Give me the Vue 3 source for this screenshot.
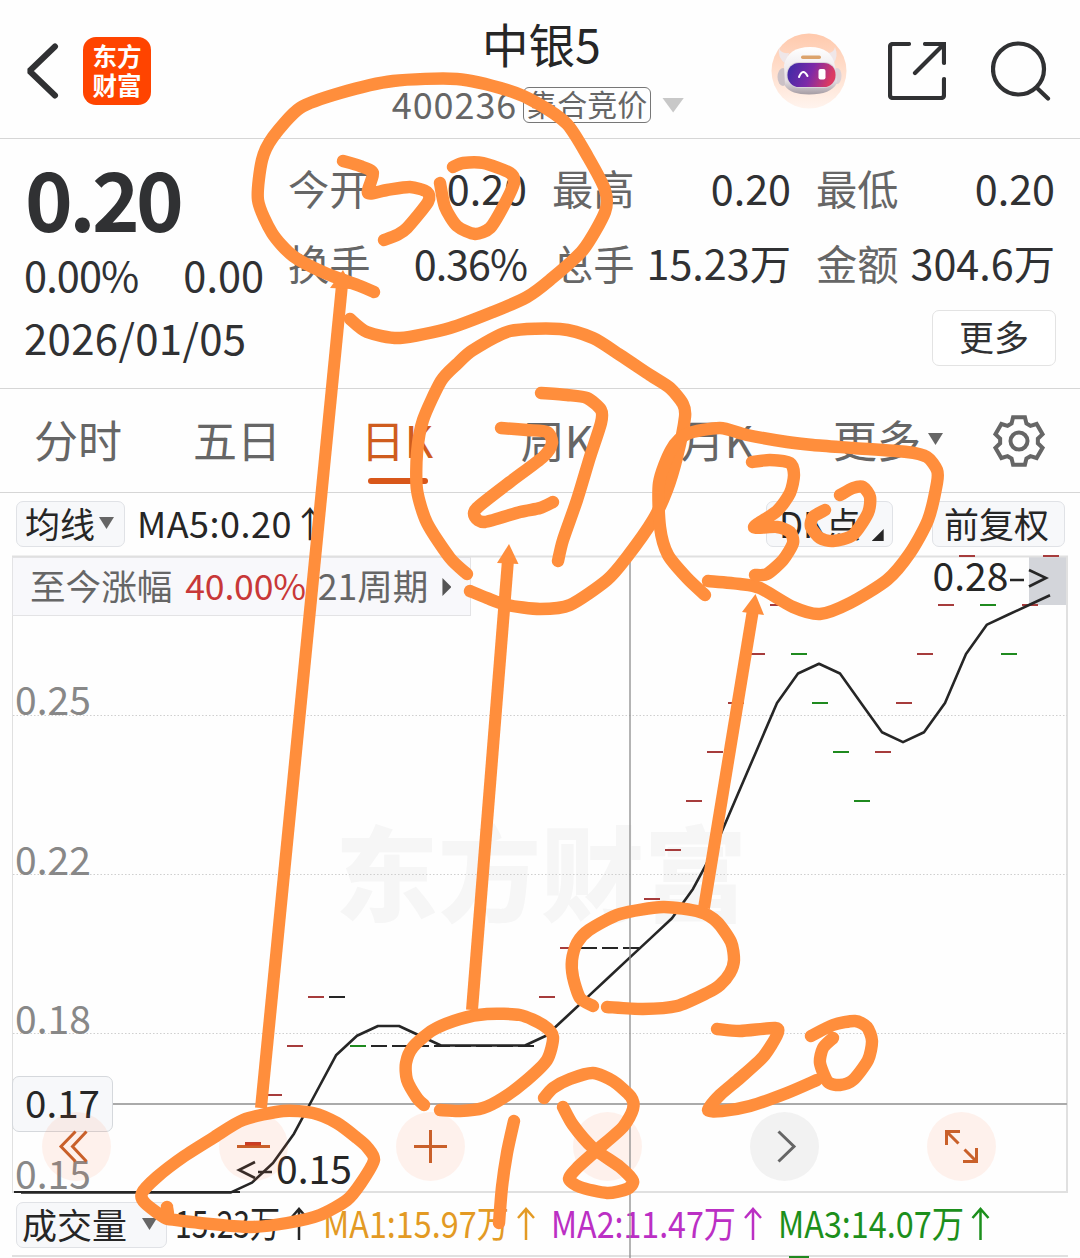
<template>
  <div class="stock-page">
    <header class="top-bar">
      <div class="top-bar__left">
        <svg class="icon-back" width="34" height="58" viewBox="0 0 34 58">
          <path d="M30 4.500L4.500 29L30 53.500" />
        </svg>
        <div class="brand">
          <span>东方</span>
          <span>财富</span>
        </div>
      </div>
      <div class="top-bar__center">
        <div class="stock-name">中银5</div>
        <div class="stock-sub">
          <span class="stock-code">400236</span>
          <span class="stock-tag">集合竞价</span>
          <i class="caret caret--light"></i>
        </div>
      </div>
      <div class="top-bar__right">
        <svg width="76" height="76" viewBox="0 0 76 76">
          <defs>
            <linearGradient id="avatarBg" x1="0" y1="0" x2="0" y2="1">
              <stop offset="0" stop-color="#ffc9ac" />
              <stop offset="1" stop-color="#fff4ee" />
            </linearGradient>
            <linearGradient id="visor" x1="0" y1="0" x2="1" y2="0.2">
              <stop offset="0" stop-color="#3a2ba6" />
              <stop offset="0.55" stop-color="#7d2aa8" />
              <stop offset="1" stop-color="#dc3a62" />
            </linearGradient>
            <linearGradient id="helmet" x1="0" y1="0" x2="0" y2="1">
              <stop offset="0" stop-color="#ffffff" />
              <stop offset="0.7" stop-color="#e6e0e4" />
              <stop offset="1" stop-color="#a59ca3" />
            </linearGradient>
          </defs>
          <circle cx="38" cy="38" r="37.500" fill="url(#avatarBg)" />
          <path d="M8 14Q9 21 18 20L15 31Q6 25 8 14ZM64 14Q68 24 62 31L56 20Q63 20 64 14Z" fill="#efe6e8" />
          <ellipse cx="12" cy="44" rx="5.500" ry="9" fill="#cbc1c6" />
          <ellipse cx="66" cy="43" rx="4.500" ry="8" fill="#ddd2d6" />
          <path d="M13 32Q17 14 39 14Q61 14 64 33L66 50Q60 61.500 38 61.500Q20 61.500 14 53Z" fill="url(#helmet)" />
          <rect x="30" y="22.500" width="20" height="3.500" rx="1.700" fill="#dca36c" />
          <rect x="15.500" y="29" width="50" height="26" rx="12.500" fill="#d9d2da" />
          <rect x="16.500" y="30" width="48" height="24" rx="11.500" fill="url(#visor)" />
          <path d="M28 44Q32 34.500 36.500 43" fill="none" stroke="#fff" stroke-width="2" stroke-linecap="round" />
          <rect x="47.500" y="36" width="7" height="10.500" rx="2" fill="#fff" />
        </svg>
        <svg class="icon-line icon-share" width="58" height="58" viewBox="0 0 58 58">
          <path d="M21 2H5Q2 2 2 5V53Q2 56 5 56H53Q56 56 56 53V37" />
          <path d="M37 2H56V21M55 3L27 31" />
        </svg>
        <svg class="icon-line icon-search" width="60" height="60" viewBox="0 0 60 60">
          <circle cx="27.500" cy="28" r="25.500" />
          <path d="M46 47L57 57.500" />
        </svg>
      </div>
    </header>

    <section class="quote">
      <div class="quote__main">
        <div class="quote__price">0.20</div>
        <div class="quote__change"><span>0.00%</span><span>0.00</span></div>
        <div class="quote__date">2026/01/05</div>
      </div>
      <div class="quote__side">
        <dl class="quote__grid">
          <div v-for="item in quoteItems" :key="item.label" class="quote__item">
            <dt>{{ item.label }}</dt>
            <dd :class="{ tight: item.value.endsWith('%') }">{{ item.value }}</dd>
          </div>
        </dl>
        <button class="more-btn">更多</button>
      </div>
    </section>

    <nav class="tabs">
      <div
        v-for="tab in tabs"
        :key="tab.label"
        :class="['tabs__item', { 'tabs__item--active': tab.active }]"
      >
        {{ tab.label }}<i v-if="tab.menu" class="caret"></i>
      </div>
      <svg class="gear" width="54" height="54" viewBox="-27 -27 54 54">
        <path :d="gearPath" />
        <circle r="8.500" />
      </svg>
    </nav>

    <section class="indicator">
      <button class="chip chip--ma">均线<i class="caret"></i></button>
      <span class="indicator__value">MA5:0.20<span class="up">↑</span></span>
      <button class="chip chip--dk">DK点<i class="corner"></i></button>
      <button class="chip chip--adj">前复权</button>
    </section>

    <section class="chart">
      <svg class="chart__canvas" width="1080" height="640" viewBox="0 555 1080 640">
        <text class="watermark" x="335" y="914" textLength="412">东方财富</text>
        <rect x="1029" y="556" width="38" height="49" fill="#d3d5da" />
        <path class="frame" d="M12 556.500H1067V1192H12" />
        <path class="frame frame--left" d="M12.500 556V1192" />
        <path
          v-for="y in [715.5, 874.5, 1033.5]"
          :key="y"
          class="grid"
          :d="`M13 ${y}H1067`"
        />
        <text v-for="l in axisLabels" :key="l.text" class="axis" x="15" :y="l.y">{{ l.text }}</text>
        <path class="cross" d="M112 1104H1067" />
        <path
          v-for="(bar, i) in bars"
          :key="i"
          :d="`M${bar.x - 8} ${bar.y}h16`"
          :stroke="bar.color"
          stroke-width="2"
        />
        <polyline class="ma-line" :points="maPoints" />
        <text class="mark" x="932.500" y="591">0.28</text>
        <path class="mark-line" d="M1010 580H1024M1029 570L1046 578L1029 586.500" />
        <text class="mark" x="276" y="1184">0.15</text>
        <path class="mark-line" d="M255 1162L239 1170L255 1178M258 1172H272" />
      </svg>

      <div class="range-info">
        <span>至今涨幅</span>
        <span class="range-info__pct">40.00%</span>
        <span>21周期</span>
        <i class="caret-right"></i>
      </div>
      <div class="price-tag">0.17</div>

      <div class="controls">
        <span class="controls__btn">
          <svg viewBox="-34.500 -34.500 69 69"><path d="M-1 -15L-15.500 0L-1 15M10 -15L-4 0L10 15" /></svg>
        </span>
        <span class="controls__btn">
          <svg viewBox="-34.500 -34.500 69 69">
            <path d="M-16.500 0H16.500" />
            <path d="M-8.500 -2.500H7.500" stroke="#cf3d20" />
          </svg>
        </span>
        <span class="controls__btn">
          <svg viewBox="-34.500 -34.500 69 69"><path d="M-16.500 0H16.500M0 -16.500V16.500" /></svg>
        </span>
        <span class="controls__btn"></span>
        <span class="controls__btn controls__btn--grey">
          <svg viewBox="-34.500 -34.500 69 69"><path d="M-6 -15L9.500 0L-6 15" /></svg>
        </span>
        <span class="controls__btn">
          <svg viewBox="-34.500 -34.500 69 69">
            <path d="M-15 -1.500V-15H-1.500M-15 -15L-3 -3M15 1.500V15H1.500M15 15L3 3" />
          </svg>
        </span>
      </div>
    </section>

    <section class="volume">
      <button class="chip chip--vol">成交量<i class="caret"></i></button>
      <svg class="volume__values" width="900" height="62" viewBox="175 1194 900 62">
        <g v-for="v in volumes" :key="v.text" :fill="v.color" :stroke="v.color">
          <text
            :x="v.x"
            y="1237.500"
            stroke="none"
            :textLength="v.width"
            lengthAdjust="spacingAndGlyphs"
          >{{ v.text }}</text>
          <path :d="`M${v.arrow} 1240V1209m-8 9l8 -9l8 9`" fill="none" stroke-width="2.500" />
        </g>
      </svg>
    </section>
    <div class="volume-chart"><i class="volume-chart__bar"></i></div>

    <div class="cross-v"></div>

    <svg class="ink" width="1080" height="1258" viewBox="0 0 1080 1258">
      <path v-for="(s, i) in strokes" :key="i" class="ink__stroke" :d="smooth(s)" />
      <g v-for="(a, i) in arrows" :key="`a${i}`">
        <path class="ink__shaft" :d="a.shaft" />
        <polygon class="ink__head" :points="a.head" />
      </g>
    </svg>
  </div>
</template>

<script setup>
const quoteItems = [
  { label: '今开', value: '0.20' },
  { label: '最高', value: '0.20' },
  { label: '最低', value: '0.20' },
  { label: '换手', value: '0.36%' },
  { label: '总手', value: '15.23万' },
  { label: '金额', value: '304.6万' },
];

const tabs = [
  { label: '分时' },
  { label: '五日' },
  { label: '日K', active: true },
  { label: '周K' },
  { label: '月K' },
  { label: '更多', menu: true },
];

const axisLabels = [
  { text: '0.25', y: 715 },
  { text: '0.22', y: 874.5 },
  { text: '0.18', y: 1034 },
  { text: '0.15', y: 1189 },
];

const volumes = [
  { text: '15.23万', x: 175, width: 105, arrow: 299, color: '#262626' },
  { text: 'MA1:15.97万', x: 323, width: 186, arrow: 526, color: '#e39a24' },
  { text: 'MA2:11.47万', x: 551, width: 185, arrow: 753, color: '#bb2fc4' },
  { text: 'MA3:14.07万', x: 778, width: 186, arrow: 980.5, color: '#1c8f1c' },
];

// closing prices in cents, oldest first
const closes = [
  15, 15, 15, 15, 15, 15, 15, 15, 15, 15, 15, 16, 17, 18, 19, 19, 18,
  18, 18, 18, 18, 18, 18, 18, 18, 19, 20, 20, 20, 20, 21, 22, 23, 24,
  25, 26, 27, 26, 25, 24, 23, 24, 25, 26, 27, 28, 27, 26, 27, 28,
];
const STEP = 21;
const FIRST_X = 22;

const priceY = (p) => 605 + (27 - p) * 48.95;

const bars = closes.map((p, i) => {
  const prev = i ? closes[i - 1] : p;
  let color = '#262626';
  if (p > prev) color = '#a63c3c';
  if (p < prev) color = '#1f8a1f';
  return { x: FIRST_X + i * STEP, y: Math.round(priceY(p)), color };
});

const maPoints = closes
  .map((p, i) => {
    const part = closes.slice(Math.max(0, i - 4), i + 1);
    const avg = part.reduce((a, b) => a + b, 0) / part.length;
    return `${FIRST_X + i * STEP - 1},${priceY(avg).toFixed(1)}`;
  })
  .join(' ');

// six-toothed gear outline
const gearPath = (() => {
  const pts = [];
  for (let k = 0; k < 6; k++) {
    [[-23, 19], [-14, 24.5], [14, 24.5], [23, 19]].forEach(([d, r]) => {
      const a = ((k * 60 + d - 90) * Math.PI) / 180;
      pts.push(`${(r * Math.cos(a)).toFixed(2)} ${(r * Math.sin(a)).toFixed(2)}`);
    });
  }
  return `M${pts.join('L')}Z`;
})();

const strokes = [
  [374, 292, 360, 286, 325, 273, 293, 256, 272, 233, 258, 200, 262, 160, 273, 137, 300, 108, 340, 93, 393, 81, 457, 79, 507, 90, 537, 103, 567, 124, 588, 157, 605, 190, 605, 212, 583, 250, 550, 280, 527, 297, 493, 312, 450, 328, 400, 338, 367, 332, 350, 319],
  [343, 161, 360, 166, 373, 173, 368, 193, 387, 190, 410, 187, 427, 192, 428, 202, 407, 228, 397, 235, 384, 240],
  [440, 183, 445, 207, 457, 226, 475, 234, 490, 228, 503, 207, 514, 183, 510, 173, 483, 163, 463, 163, 453, 167],
  [467, 574, 450, 558, 427, 523, 417, 490, 417, 453, 423, 420, 441, 381, 457, 364, 473, 350, 510, 331, 560, 329, 593, 338, 620, 355, 650, 375, 670, 388, 683, 404, 685, 417, 677, 457, 667, 490, 653, 520, 627, 557, 607, 580, 570, 605, 540, 609, 507, 605, 487, 598, 470, 591],
  [501, 428, 527, 430, 547, 432, 552, 443, 543, 457, 510, 482, 477, 508, 475, 517, 485, 522, 520, 512, 540, 508, 553, 502],
  [541, 393, 567, 395, 587, 398, 601, 410, 601, 423, 590, 457, 577, 500, 563, 540, 558, 561],
  [705, 595, 687, 578, 668, 555, 660, 527, 659, 483, 671, 450, 687, 434, 720, 428, 747, 435, 787, 442, 813, 445, 853, 448, 907, 452, 927, 457, 937, 470, 937, 483, 928, 520, 910, 553, 887, 580, 850, 603, 820, 614, 793, 607, 760, 588, 740, 584, 708, 581],
  [752, 462, 770, 460, 790, 463, 794, 475, 790, 493, 777, 511, 754, 527, 777, 527, 790, 532, 793, 543, 783, 560, 767, 574, 755, 575],
  [825, 510, 813, 517, 811, 527, 820, 538, 833, 541, 853, 535, 868, 513, 870, 497, 863, 487, 853, 488, 840, 495],
  [424, 1105, 417, 1098, 407, 1080, 406, 1063, 413, 1047, 433, 1030, 460, 1019, 487, 1014, 520, 1015, 543, 1025, 553, 1037, 547, 1060, 527, 1080, 503, 1098, 483, 1108, 460, 1111, 440, 1110],
  [593, 1006, 580, 998, 573, 977, 572, 960, 577, 943, 589, 930, 620, 914, 663, 907, 700, 912, 717, 922, 731, 942, 734, 960, 730, 973, 720, 985, 707, 993, 677, 1006, 643, 1009, 607, 1007],
  [167, 1207, 167, 1219, 145, 1203, 142, 1193, 157, 1177, 183, 1157, 213, 1138, 243, 1120, 283, 1111, 313, 1113, 337, 1123, 357, 1138, 367, 1147, 374, 1160, 361, 1183, 347, 1200, 320, 1215, 287, 1223, 250, 1227, 200, 1223, 168, 1219],
  [514, 1121, 507, 1153, 502, 1187, 499, 1223],
  [544, 1098, 553, 1088, 570, 1079, 593, 1073, 613, 1081, 631, 1097, 633, 1109, 623, 1127, 597, 1150, 577, 1168, 569, 1179, 580, 1187, 607, 1193, 627, 1189, 633, 1181, 620, 1167, 593, 1148, 573, 1125, 563, 1107],
  [717, 1029, 740, 1031, 775, 1028, 777, 1035, 763, 1057, 740, 1078, 720, 1095, 708, 1110, 722, 1111, 750, 1106, 787, 1093, 817, 1080],
  [811, 1036, 833, 1025, 855, 1021, 867, 1027, 872, 1041, 868, 1060, 853, 1080, 840, 1085, 828, 1082, 820, 1063, 823, 1048, 833, 1038],
];

const arrows = [
  { shaft: 'M261 1108L342 285', head: '330,288 343,270 353,289' },
  { shaft: 'M472 1010L508 560', head: '497,563 509,544 518.5,564' },
  { shaft: 'M704 908L753 610', head: '742,612 755.5,594 764,615' },
];

// flat [x, y, x, y, ...] list to a rounded path through every point
function smooth(flat) {
  const p = [];
  for (let i = 0; i < flat.length; i += 2) p.push([flat[i], flat[i + 1]]);
  let d = `M${p[0]}`;
  for (let i = 0; i < p.length - 1; i++) {
    const a = p[i - 1] || p[i];
    const b = p[i];
    const c = p[i + 1];
    const e = p[i + 2] || c;
    const c1 = [b[0] + (c[0] - a[0]) / 8, b[1] + (c[1] - a[1]) / 8];
    const c2 = [c[0] - (e[0] - b[0]) / 8, c[1] - (e[1] - b[1]) / 8];
    d += `C${c1} ${c2} ${c}`;
  }
  return d;
}
</script>

<style>
body {
  background: #fefefe;
}
</style>

<style scoped>
.stock-page {
  position: relative;
  width: 1080px;
  height: 1258px;
  overflow: hidden;
  background: #fefefe;
  color: #303133;
  font-family: 'Noto Sans CJK SC', 'Noto Sans', sans-serif;
}

.stock-page * {
  box-sizing: border-box;
}

svg {
  display: block;
  flex-shrink: 0;
}

button {
  margin: 0;
  padding: 0;
  font-family: inherit;
  color: inherit;
}

.caret {
  display: block;
  width: 15px;
  height: 12px;
  background: #666;
  clip-path: polygon(0 0, 100% 0, 50% 100%);
}

.caret--light {
  width: 22px;
  height: 15px;
  margin-left: 11px;
  background: #c8c8c8;
}

/* top bar */
.top-bar {
  display: grid;
  grid-template-columns: 1fr auto 1fr;
  height: 139px;
  border-bottom: 1px solid #d6d6d6;
}

.top-bar__left,
.top-bar__right {
  display: flex;
  align-items: center;
  padding-top: 4px;
}

.top-bar__left {
  padding-left: 25px;
}

.top-bar__right {
  justify-content: flex-end;
  padding-right: 29px;
}

.icon-back {
  fill: none;
  stroke: #303133;
  stroke-width: 6;
  stroke-linecap: round;
  stroke-linejoin: bevel;
}

.brand {
  display: flex;
  flex-direction: column;
  align-items: center;
  justify-content: center;
  width: 68px;
  height: 68px;
  margin-left: 24px;
  padding-bottom: 2px;
  border-radius: 13px;
  background: #ff4400;
  color: #fff;
  font-size: 24.5px;
  font-weight: 700;
  line-height: 29px;
}

.icon-line {
  fill: none;
  stroke: #303133;
  stroke-width: 4.2;
  stroke-linecap: round;
}

.icon-share {
  margin-left: 41px;
}

.icon-search {
  margin-left: 45px;
}

.top-bar__center {
  padding-top: 15px;
}

.stock-name {
  padding-left: 3px;
  color: #262626;
  font-size: 46.5px;
  line-height: 56px;
  text-align: center;
}

.stock-sub {
  display: flex;
  align-items: center;
  height: 36px;
  margin-top: 16px;
  padding-right: 4px;
  color: #666;
}

.stock-code {
  padding-bottom: 4px;
  font-size: 36px;
  letter-spacing: 0.9px;
  line-height: 36px;
}

.stock-tag {
  height: 36px;
  margin-left: 6px;
  padding: 0 3px;
  border: 1.5px solid #777;
  border-radius: 6px;
  font-size: 30px;
  line-height: 30px;
}

/* quote */
.quote {
  display: flex;
  height: 250px;
  padding: 0 25px 0 24px;
  border-bottom: 1px solid #d6d6d6;
}

.quote__main {
  width: 264px;
  padding-top: 12px;
}

.quote__price {
  padding-left: 1px;
  font-size: 81px;
  font-weight: 700;
  letter-spacing: -3.6px;
  line-height: 91px;
}

.quote__change {
  display: flex;
  justify-content: space-between;
  width: 240px;
  margin-top: 4px;
  font-size: 41.5px;
  line-height: 56px;
}

.quote__change span:first-child {
  letter-spacing: -0.9px;
}

.quote__date {
  margin-top: 7px;
  font-size: 42px;
  letter-spacing: 0.3px;
  line-height: 56px;
}

.quote__side {
  flex: 1;
  padding-top: 18px;
}

.quote__grid {
  display: grid;
  grid-template-columns: repeat(3, 239px);
  column-gap: 25px;
  margin: 0;
}

.quote__item {
  display: flex;
  justify-content: space-between;
  height: 75px;
  font-size: 41.3px;
  line-height: 60px;
  white-space: nowrap;
}

.quote__item dt {
  color: #666;
}

.quote__item dd {
  margin: 0;
}

.quote__item .tight {
  letter-spacing: -1px;
}

.more-btn {
  display: block;
  width: 124px;
  height: 56px;
  margin: 3px -1px 0 auto;
  padding-bottom: 4px;
  border: 1.5px solid #e3e3e3;
  border-radius: 7px;
  background: #fff;
  font-size: 35px;
  line-height: 48px;
}

/* tabs */
.tabs {
  display: grid;
  grid-template-columns: 156px repeat(4, 160px) 182px 1fr;
  align-items: center;
  height: 104px;
  padding-right: 21px;
  border-bottom: 1px solid #d6d6d6;
}

.tabs__item {
  display: flex;
  align-items: center;
  justify-content: center;
  position: relative;
  height: 103px;
  padding-bottom: 3px;
  padding-left: 2px;
  color: #666;
  font-size: 44px;
  line-height: 60px;
}

.tabs__item:first-child {
  padding-left: 0;
}

.tabs__item .caret {
  margin-left: 7px;
}

.tabs__item--active {
  color: #cf5c1e;
}

.tabs__item--active::after {
  content: '';
  position: absolute;
  bottom: 8px;
  left: 52px;
  width: 60px;
  height: 6px;
  border-radius: 3px;
  background: #d8571a;
}

.gear {
  justify-self: center;
  fill: none;
  stroke: #666;
  stroke-width: 4;
}

/* indicator row */
.indicator {
  display: flex;
  align-items: flex-start;
  height: 62px;
  padding: 8px 15px 0 16px;
}

.chip {
  display: flex;
  align-items: center;
  height: 46px;
  padding-bottom: 2px;
  border: 1.5px solid #e0e2e6;
  border-radius: 7px;
  background: #f7f8fa;
  color: #262626;
  font-size: 35px;
  line-height: 40px;
  white-space: nowrap;
}

.chip--ma {
  width: 109px;
  padding-left: 8px;
}

.chip--ma .caret {
  margin-left: 4px;
}

.chip--dk {
  width: 127px;
  margin-left: auto;
  padding-left: 12px;
}

.chip--adj {
  width: 133px;
  margin-left: 39px;
  padding-left: 11px;
}

.corner {
  align-self: flex-end;
  width: 12px;
  height: 12px;
  margin: 0 0 3px 11px;
  background: #262626;
  clip-path: polygon(100% 0, 100% 100%, 0 100%);
}

.indicator__value {
  margin-left: 12px;
  color: #262626;
  font-size: 36px;
  letter-spacing: 0.5px;
  line-height: 42px;
}

.up {
  display: inline-block;
  margin-left: 0;
}

/* chart */
.chart {
  position: relative;
  height: 639px;
}

.chart__canvas text {
  font-size: 39px;
}

.chart__canvas .watermark {
  fill: #f6f6f6;
  font-size: 103px;
  font-weight: 900;
}

.frame {
  fill: none;
  stroke: #e0e0e0;
  stroke-width: 2;
}

.frame--left {
  stroke-width: 1;
}

.grid {
  stroke: #cfcfcf;
  stroke-width: 1;
  stroke-dasharray: 1.5 2;
}

.axis {
  fill: #888;
}

.cross {
  stroke: #aaa;
  stroke-width: 2;
}

.ma-line {
  fill: none;
  stroke: #262626;
  stroke-width: 2.6;
  stroke-linejoin: round;
}

.mark {
  fill: #262626;
}

.mark-line {
  fill: none;
  stroke: #262626;
  stroke-width: 2.6;
}

.range-info {
  position: absolute;
  top: 2px;
  left: 12px;
  display: flex;
  align-items: center;
  width: 459px;
  height: 59px;
  padding: 0 0 4px 17px;
  border: 1.5px solid #e3e3e5;
  background: #f8f8fb;
  color: #666;
  font-size: 35.6px;
  line-height: 50px;
  white-space: nowrap;
}

.range-info__pct {
  margin: 0 12px 0 13px;
  color: #c83838;
  letter-spacing: -0.2px;
}

.caret-right {
  width: 9px;
  height: 18px;
  margin: 5px 0 0 14px;
  background: #555;
  clip-path: polygon(0 0, 100% 50%, 0 100%);
}

.price-tag {
  position: absolute;
  top: 521px;
  left: 12px;
  width: 101px;
  height: 56px;
  border: 1.5px solid #d5d8dc;
  border-radius: 7px;
  background: #f7f8fa;
  color: #262626;
  font-size: 38.5px;
  line-height: 49px;
  text-align: center;
}

.controls {
  position: absolute;
  top: 557px;
  left: 42px;
  display: flex;
  gap: 108px;
}

.controls__btn {
  width: 69px;
  height: 69px;
  border-radius: 50%;
  background: rgba(255, 115, 50, 0.09);
}

.controls__btn svg {
  fill: none;
  stroke: #c9602a;
  stroke-width: 3;
}

.controls__btn--grey {
  background: #f2f2f2;
}

.controls__btn--grey svg {
  stroke: #666;
}

/* volume */
.volume {
  display: flex;
  height: 61px;
  padding: 8px 0 0 16px;
}

.chip--vol {
  width: 151px;
  padding-left: 5px;
}

.chip--vol .caret {
  margin-left: 15px;
}

.volume__values {
  margin: -8px 0 0 8px;
  font-size: 37px;
}

.volume-chart {
  height: 3px;
  margin: 0 12px;
  border-top: 2px solid #e0e0e0;
}

.volume-chart__bar {
  display: block;
  width: 20px;
  height: 2px;
  margin: -1px 0 0 777px;
  background: #1f8a1f;
}

.cross-v {
  position: absolute;
  top: 557px;
  left: 629px;
  width: 2px;
  height: 701px;
  background: rgba(140, 140, 140, 0.65);
}

/* freehand marks over the page */
.ink {
  position: absolute;
  top: 0;
  left: 0;
}

.ink__stroke {
  fill: none;
  stroke: #ff8e3c;
  stroke-width: 12.4;
  stroke-linecap: round;
  stroke-linejoin: round;
}

.ink__shaft {
  stroke: #ff8e3c;
  stroke-width: 12;
}

.ink__head {
  fill: #ff8e3c;
}
</style>
